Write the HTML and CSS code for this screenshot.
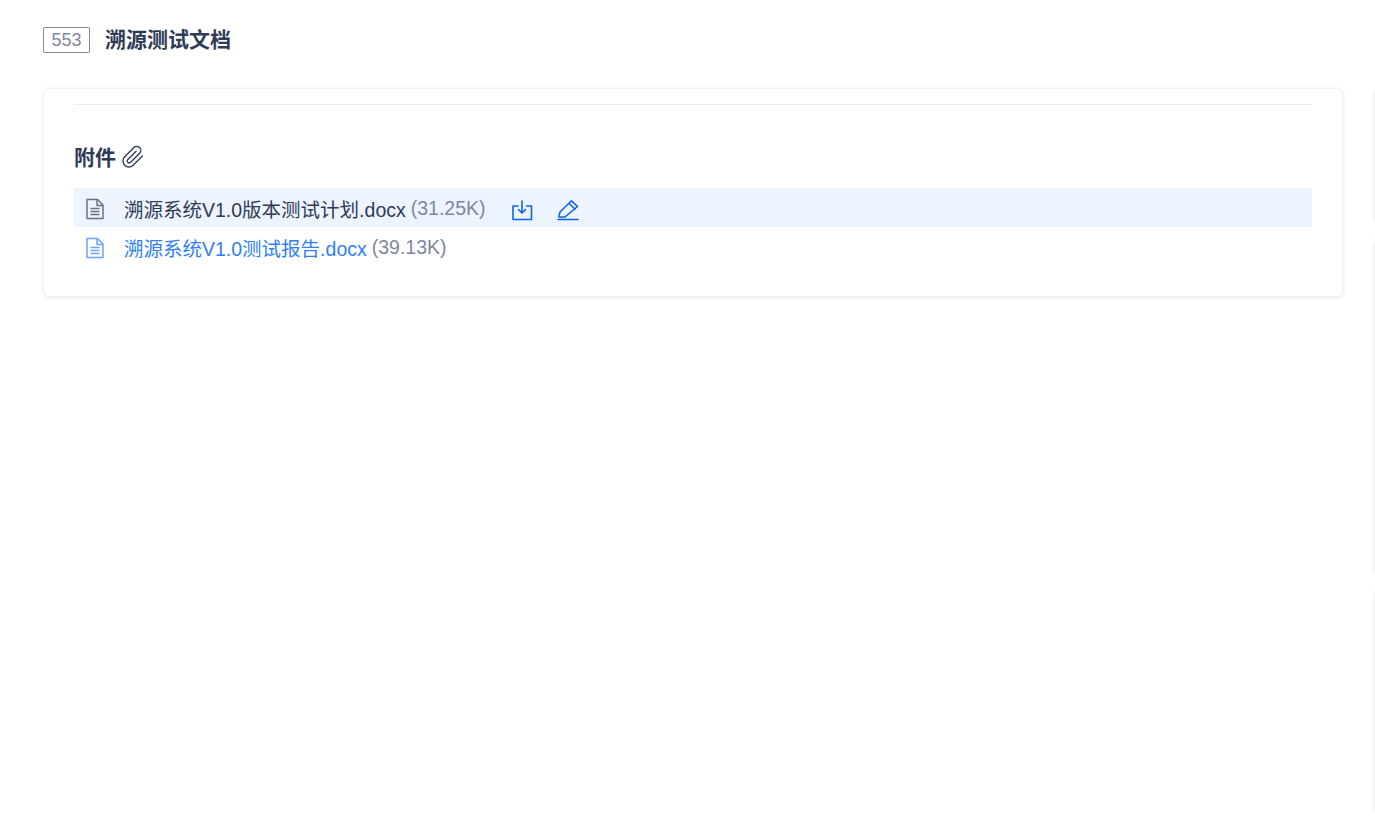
FILE: index.html
```html
<!DOCTYPE html>
<html lang="zh-CN">
<head>
<meta charset="utf-8">
<title>溯源测试文档</title>
<link rel="stylesheet" href="styles.css">
</head>
<body>
<div class="page">
  <header class="head">
    <span class="badge">553</span>
    <h1 class="title">溯源测试文档</h1>
  </header>
  <div class="content">
    <main class="card main">
      <div class="rule"></div>
      <h2 class="att-title">附件
        <svg class="clip" width="24" height="24" viewBox="0 0 24 24" fill="none" stroke="#333e55" stroke-width="1.4" stroke-linecap="round" stroke-linejoin="round"><path d="M21.4 11.100l-9.200 9.200a6 6 0 0 1-8.500-8.500l9.200-9.200a4 4 0 0 1 5.700 5.700l-9.200 9.200a2 2 0 0 1-2.800-2.800l8.500-8.500"/></svg>
      </h2>
      <ul class="files">
        <li class="file file-hover">
          <svg class="doc" width="20" height="22" viewBox="0 0 20 22" fill="none" stroke="#6b7185" stroke-width="1.5" stroke-linejoin="round"><path d="M2 1.500h10.500L18 7v13.500H2z"/><path d="M12 1.500V7.500h6"/><path d="M5.500 10.500h9M5.500 13.500h9M5.500 16.500h9"/></svg>
          <span class="name">溯源系统V1.0版本测试计划.docx</span>
          <span class="size">(31.25K)</span>
          <span class="actions">
            <svg width="22" height="22" viewBox="0 0 22 22" fill="none" stroke="#0b63e5" stroke-width="1.600" stroke-linecap="round" stroke-linejoin="round"><path d="M7 7H2v13.500h18.500V7h-5"/><path d="M11 2v11.500"/><path d="M7.500 10.500l3.500 3.500 3.500-3.500"/></svg>
            <svg width="22" height="22" viewBox="0 0 22 22" fill="none" stroke="#0b63e5" stroke-width="1.600" stroke-linecap="round" stroke-linejoin="round"><path d="M1.800 18l1.200-5L14.500 1.800 20.500 7.500 8 18z"/><path d="M12 4.500l6 5.500"/><path d="M1 20.500h20"/></svg>
          </span>
        </li>
        <li class="file file-link">
          <svg class="doc" width="20" height="22" viewBox="0 0 20 22" fill="none" stroke="#6aa3fb" stroke-width="1.5" stroke-linejoin="round"><path d="M2 1.500h10.500L18 7v13.500H2z"/><path d="M12 1.500V7.500h6"/><path d="M5.500 10.500h9M5.500 13.500h9M5.500 16.500h9"/></svg>
          <span class="name">溯源系统V1.0测试报告.docx</span>
          <span class="size">(39.13K)</span>
        </li>
      </ul>
    </main>
    <aside class="side">
      <div class="card side-a"></div>
      <div class="card side-b"></div>
      <div class="card side-c"></div>
    </aside>
  </div>
</div>
</body>
</html>
```
FILE: styles.css
```css
* { box-sizing: border-box; }
html, body { margin: 0; height: 100%; overflow: hidden; background: #fff; }
body { font-family: "Liberation Sans", "Noto Sans CJK SC", sans-serif; color: #2f3b56; }
.page { width: 1700px; padding: 27px 0 0 43px; }
.head { display: flex; align-items: center; height: 26px; }
.badge { width: 47px; height: 26px; border: 1px solid #7f87a0; border-radius: 2px; color: #7f87a0; font-size: 18px; line-height: 24px; text-align: center; }
.title { margin: 0 0 0 15px; font-size: 21px; line-height: 26px; font-weight: 700; color: #2f3b56; }
.content { display: flex; align-items: flex-start; gap: 31px; margin-top: 35px; }
.card { background: #fff; border-radius: 6px; border: 1px solid #f0f0f2; box-shadow: 0 1px 5px rgba(0, 0, 0, 0.07); }
.main { width: 1300px; height: 209px; padding: 15px 30px 0; flex: none; }
.rule { height: 1px; background: #ececef; }
.att-title { display: flex; align-items: center; margin: 38px 0 15px; font-size: 21px; line-height: 30px; font-weight: 700; color: #2f3b56; gap: 5px; }
.clip { margin-top: -3px; }
.files { list-style: none; margin: 0; padding: 0; }
.file { display: flex; align-items: center; height: 39px; padding: 2px 0 0 11px; font-size: 19.5px; white-space: nowrap; }
.file-hover { background: #edf4fe; color: #2f3b56; }
.file-link { color: #2f80f7; }
.doc { flex: none; margin-right: 19px; }
.size { margin-left: 5px; color: #7f87a0; }
.actions { display: flex; gap: 24px; margin-left: 25px; margin-top: 3px; }
.side { width: 300px; flex: none; display: flex; flex-direction: column; gap: 15px; }
.side-a { height: 135px; }
.side-b { height: 336px; }
.side-c { height: 222px; }
```
